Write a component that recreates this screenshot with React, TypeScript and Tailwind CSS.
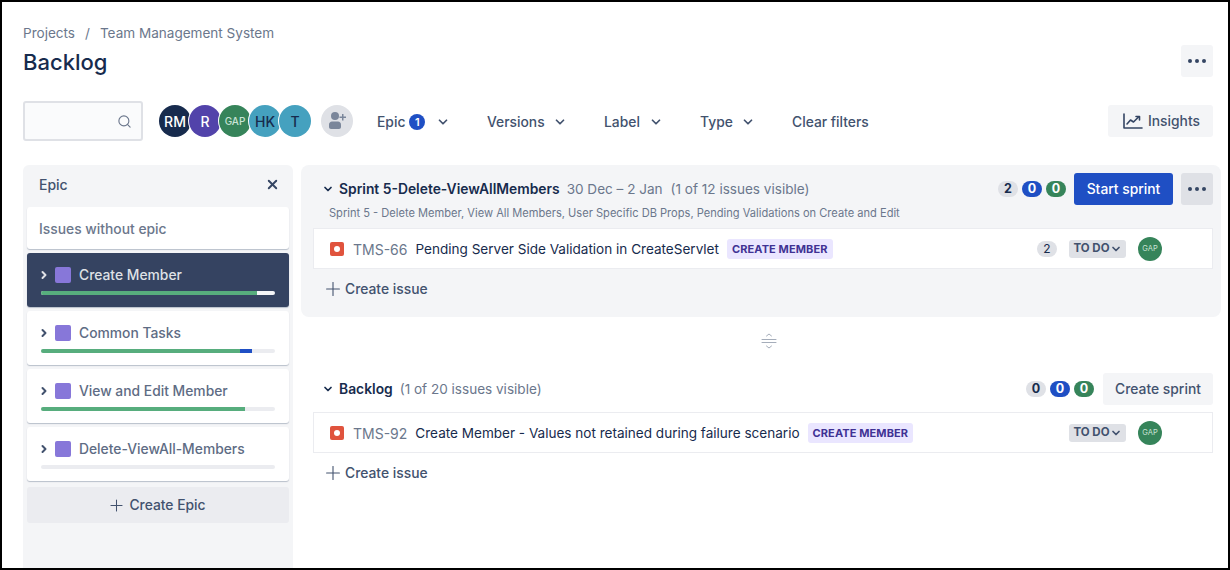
import { ChevronDown, ChevronRight, Plus, Search, X } from 'lucide-react';

const members = [
  { label: 'RM', color: 'bg-[#172b4d] text-white', size: 'text-[14px]' },
  { label: 'R', color: 'bg-[#5243aa] text-white', size: 'text-[14px]' },
  { label: 'GAP', color: 'bg-[#36845a] text-[#c9e3d5]', size: 'text-[10px]' },
  { label: 'HK', color: 'bg-[#45a1bf] text-[#172b4d]', size: 'text-[14px]' },
  { label: 'T', color: 'bg-[#45a1bf] text-[#172b4d]', size: 'text-[14px]' },
];

const epics = [
  { name: 'Create Member', done: 'w-[216px]', progress: '', active: true },
  { name: 'Common Tasks', done: 'w-[199px]', progress: 'w-[12px]', active: false },
  { name: 'View and Edit Member', done: 'w-[204px]', progress: '', active: false },
  { name: 'Delete-ViewAll-Members', done: 'w-0', progress: '', active: false },
];

const filters = [
  { name: 'Epic', width: 'w-[110px]', gap: 'ml-[11px]' },
  { name: 'Versions', width: 'w-[117px]', gap: 'ml-[8px]' },
  { name: 'Label', width: 'w-[96px]', gap: 'ml-[9px]' },
  { name: 'Type', width: 'w-[92px]', gap: 'ml-[8px]' },
];

const MoreDots = () => (
  <span className="flex items-center gap-[3px]">
    <span className="w-1 h-1 rounded-full bg-[#344563]" />
    <span className="w-1 h-1 rounded-full bg-[#344563]" />
    <span className="w-1 h-1 rounded-full bg-[#344563]" />
  </span>
);

const Count = ({ value, color }: { value: number; color: string }) => (
  <span className={`w-5 h-4 rounded-full flex items-center justify-center text-[12.5px] font-bold ${color}`}>
    {value}
  </span>
);

const Avatar = () => (
  <div className="w-6 h-6 rounded-full bg-[#36845a] text-[#c9e3d5] text-[7.5px] flex items-center justify-center">
    GAP
  </div>
);

const IssueRow = ({ id, title, points }: { id: string; title: string; points?: number }) => (
  <div className="h-[41px] bg-white border border-[#ebecf0] flex items-center pl-4 pr-[50px] text-[14px]">
    <span className="w-[14px] h-[14px] rounded-[2px] bg-[#e0533d] flex items-center justify-center">
      <span className="w-[6px] h-[6px] rounded-full bg-white" />
    </span>
    <span className="ml-[9px] pt-[2px] text-[#6b778c]">{id}</span>
    <span className="ml-2 pt-[2px] text-[13.55px] text-[#172b4d]">{title}</span>
    <span className="ml-2 mt-[1px] h-5 px-[5px] rounded-[3px] bg-[#eae6ff] text-[#403294] text-[11px] font-bold tracking-[0.1px] flex items-center">
      CREATE MEMBER
    </span>
    <span className="ml-auto flex items-center">
      {points && (
        <span className="w-5 h-4 mr-3 rounded-full bg-[#dfe1e6] text-[#172b4d] text-[12px] flex items-center justify-center">
          {points}
        </span>
      )}
      <span className="w-[57px] h-[18px] rounded-[3px] bg-[#dfe1e6] text-[#42526e] text-[11.5px] font-bold flex items-center justify-center">
        TO DO
        <ChevronDown size={12} strokeWidth={3.5} />
      </span>
      <span className="ml-3">
        <Avatar />
      </span>
    </span>
  </div>
);

const CreateIssue = () => (
  <div className="h-10 flex items-center gap-[4px] pl-[12px] text-[13.85px] font-medium text-[#42526e]">
    <Plus size={22} strokeWidth={1.2} className="-mx-[3px]" />
    Create issue
  </div>
);

export default function App() {
  return (
    <div className="w-[1230px] h-[570px] overflow-hidden bg-white border-2 border-black font-['Inter',sans-serif] text-[#172b4d] flex flex-col">
      {/* Header */}
      <div className="pl-[21px] pr-[15px] pt-[22px] flex justify-between">
        <div>
          <div className="flex items-center h-[18px] text-[13.55px] text-[#6b778c]">
            <span>Projects</span>
            <span className="mx-[10px]">/</span>
            <span>Team Management System</span>
          </div>
          <h1 className="mt-[4px] text-[22px] leading-[32px] font-medium">Backlog</h1>
        </div>
        <button className="mt-[21px] w-8 h-8 rounded-[3px] bg-[#f4f5f7] flex items-center justify-center">
          <MoreDots />
        </button>
      </div>

      {/* Filters */}
      <div className="mt-[23px] pl-[21px] pr-[15px] h-10 flex items-center">
        <div className="w-[120px] h-10 rounded-[3px] border-2 border-[#dfe1e6] bg-[#fafbfc] flex items-center justify-end pr-[9px] text-[#6b778c]">
          <Search size={15} strokeWidth={1.8} />
        </div>
        <div className="ml-4 flex">
          {members.map((m, i) => (
            <div
              key={m.label}
              className={`w-[32px] h-[32px] rounded-full flex items-center justify-center font-medium ring-1 ring-white ${m.color} ${m.size} ${i > 0 ? '-ml-[2px]' : ''}`}
            >
              {m.label}
            </div>
          ))}
        </div>
        <div className="ml-[10px] w-8 h-8 rounded-full bg-[#dfe1e6] flex items-center justify-center">
          <svg width="20" height="20" viewBox="0 0 20 20" fill="#7a869a">
            <circle cx="8" cy="5" r="4" />
            <path d="M2 13.5c0-1.6 1.3-3 3-3h6c1.700 0 3 1.400 3 3V16c0 1.100-.9 2-2 2H4c-1.100 0-2-.9-2-2z" />
            <path d="M15 3h1.500v2.500H19V7h-2.500v2.500H15V7h-2.500V5.500H15z" />
          </svg>
        </div>
        <div className="ml-6 pt-[2px] flex items-center text-[13.85px] font-medium text-[#42526e]">
          {filters.map((f) => (
            <div key={f.name} className={`flex items-center ${f.width}`}>
              {f.name}
              {f.name === 'Epic' && (
                <span className="ml-1 w-4 h-4 rounded-full bg-[#1f4fc4] text-white text-[11px] font-semibold flex items-center justify-center">
                  1
                </span>
              )}
              <ChevronDown size={14} strokeWidth={3} className={f.gap} />
            </div>
          ))}
          <span>Clear filters</span>
        </div>
        <button className="ml-auto w-[105px] h-8 rounded-[3px] bg-[#f4f5f7] flex items-center justify-center gap-[5px] text-[13.85px] font-medium text-[#42526e]">
          <svg width="20" height="20" viewBox="0 0 20 20" fill="none" stroke="#344563" strokeWidth="1.600" strokeLinecap="round" strokeLinejoin="round" className="ml-[2px]">
            <path d="M1 3v14h18" />
            <path d="M4 13l3.500-4 3 2 5-5" />
            <path d="M13 5.500h3.500V9" />
          </svg>
          Insights
        </button>
      </div>

      {/* Body */}
      <div className="mt-6 flex-1 pl-[21px] flex gap-2 min-h-0">
        {/* Epic panel */}
        <aside className="w-[270px] rounded-t-[6px] bg-[#f4f5f7] px-1 flex flex-col">
          <div className="h-[42px] pb-1 flex items-center justify-between pl-3 pr-[9px] text-[14px] font-medium text-[#42526e]">
            Epic
            <X size={15} strokeWidth={3} className="text-[#344563]" />
          </div>
          <div className="h-[42px] pt-[2px] rounded-[3px] bg-white shadow-[0_1px_1px_rgba(9,30,66,0.25)] flex items-center pl-3 text-[13.85px] font-medium text-[#6b778c]">
            Issues without epic
          </div>
          {epics.map((e) => (
            <div
              key={e.name}
              className={`mt-1 h-[54px] rounded-[3px] shadow-[0_1px_1px_rgba(9,30,66,0.25)] pl-[14px] pt-[14px] ${e.active ? 'bg-[#354361]' : 'bg-white'}`}
            >
              <div className={`h-4 flex items-center text-[13.85px] font-medium ${e.active ? 'text-[#dfe1e6]' : 'text-[#5e6c84]'}`}>
                <ChevronRight size={12} strokeWidth={4} className={`-ml-[3px] mr-[1px] ${e.active ? 'text-[#dfe1e6]' : 'text-[#42526e]'}`} />
                <span className="ml-[4px] w-4 h-4 rounded-[2px] bg-[#8777d9]" />
                <span className="ml-2">{e.name}</span>
              </div>
              <div className={`mt-2 w-[234px] h-1 rounded-full overflow-hidden flex ${e.active ? 'bg-[#f4f5f7]' : 'bg-[#ebecf0]'}`}>
                <div className={`h-1 bg-[#57ad7d] ${e.done}`} />
                {e.progress && <div className={`h-1 bg-[#1f4fc4] ${e.progress}`} />}
              </div>
            </div>
          ))}
          <button className="mt-[6px] h-9 rounded-[3px] bg-[#ebecf0] flex items-center justify-center gap-[6px] text-[13.85px] font-medium text-[#42526e]">
            <Plus size={19} strokeWidth={1.300} className="-mx-[3px]" />
            Create Epic
          </button>
        </aside>

        {/* Sprint and backlog */}
        <main className="w-[920px] flex flex-col">
          <section className="h-[152px] rounded-[8px] bg-[#f4f5f7] pl-3 pr-2">
            <div className="h-[40px] pt-2 flex items-center">
              <ChevronDown size={12} strokeWidth={3.500} className="ml-[9px] text-[#172b4d]" />
              <span className="ml-[5px] text-[13.85px] font-semibold">Sprint 5-Delete-ViewAllMembers</span>
              <span className="ml-[7px] text-[13.55px] text-[#6b778c]">30 Dec – 2 Jan</span>
              <span className="ml-[8px] text-[13.55px] text-[#6b778c]">(1 of 12 issues visible)</span>
              <span className="ml-auto flex items-center gap-1">
                <Count value={2} color="bg-[#dfe1e6] text-[#172b4d]" />
                <Count value={0} color="bg-[#1f4fc4] text-white" />
                <Count value={0} color="bg-[#36845a] text-white" />
              </span>
              <button className="ml-2 w-[99px] h-8 rounded-[3px] bg-[#1f4fc4] text-white text-[13.85px] font-medium">
                Start sprint
              </button>
              <button className="ml-2 w-8 h-8 rounded-[3px] bg-[#dfe1e6] flex items-center justify-center">
                <MoreDots />
              </button>
            </div>
            <div className="h-[23px] pb-[7px] pl-4 flex items-center text-[11.1px] text-[#6b778c]">
              Sprint 5 - Delete Member, View All Members, User Specific DB Props, Pending Validations on Create and Edit
            </div>
            <IssueRow id="TMS-66" title="Pending Server Side Validation in CreateServlet" points={2} />
            <CreateIssue />
          </section>

          <div className="h-[48px] pl-4 flex items-center justify-center">
            <svg width="16" height="16" viewBox="0 0 16 16" fill="none" stroke="#a5adba" strokeWidth="1" strokeLinecap="round" strokeLinejoin="round">
              <path d="M5.500 3 8 1l2.500 2" />
              <path d="M1 6.500h14M1 9.500h14" />
              <path d="M5.500 13 8 15l2.500-2" />
            </svg>
          </div>

          <section className="pl-3 pr-2">
            <div className="h-[40px] pt-2 flex items-center">
              <ChevronDown size={12} strokeWidth={3.500} className="ml-[9px] text-[#172b4d]" />
              <span className="ml-[5px] text-[13.85px] font-semibold">Backlog</span>
              <span className="ml-[7px] text-[13.55px] text-[#6b778c]">(1 of 20 issues visible)</span>
              <span className="ml-auto flex items-center gap-1">
                <Count value={0} color="bg-[#dfe1e6] text-[#172b4d]" />
                <Count value={0} color="bg-[#1f4fc4] text-white" />
                <Count value={0} color="bg-[#36845a] text-white" />
              </span>
              <button className="ml-[9px] w-[110px] h-8 rounded-[3px] bg-[#f4f5f7] text-[#42526e] text-[13.85px] font-medium">
                Create sprint
              </button>
            </div>
            <div className="mt-[7px]">
              <IssueRow id="TMS-92" title="Create Member - Values not retained during failure scenario" />
            </div>
            <CreateIssue />
          </section>
        </main>
      </div>
    </div>
  );
}
